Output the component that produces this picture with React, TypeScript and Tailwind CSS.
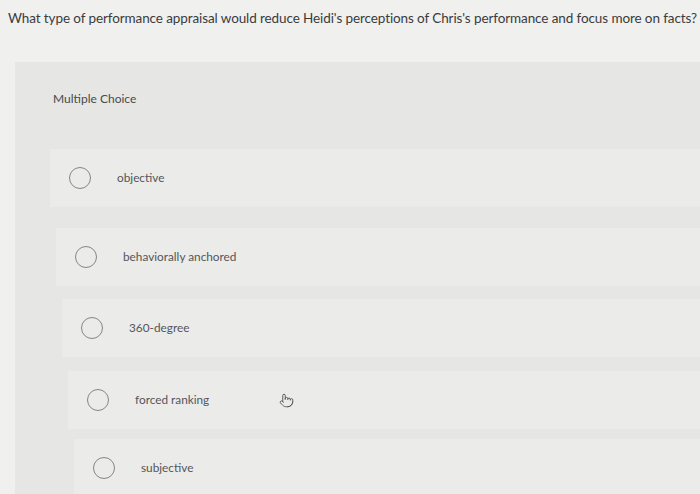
import { Pointer } from "lucide-react";

const options = [
  { label: "objective", row: "ml-[35px] mt-[42px]" },
  { label: "behaviorally anchored", row: "ml-[41px] mt-[21px]" },
  { label: "360-degree", row: "ml-[47px] mt-[13px]" },
  { label: "forced ranking", row: "ml-[53px] mt-[14px]", cursor: true },
  { label: "subjective", row: "ml-[59px] mt-[10px]" },
];

export default function App() {
  return (
    <div className="h-[494px] w-[700px] overflow-hidden bg-[#f0f0ee] font-['Lato',sans-serif] text-[#3b3b3d]">
      <p className="pl-[8px] pt-[9px] text-[13.5px] leading-[18px] tracking-[-0.1px]">
        What type of performance appraisal would reduce Heidi's perceptions of Chris's performance and focus more on facts?
      </p>

      <div className="ml-[15px] mt-[35px] h-[440px] bg-[#e6e6e4] pt-[29px]">
        <p className="pl-[38px] text-[12px] leading-[16px] text-[#4a4a4e]">Multiple Choice</p>

        {options.map((o) => (
          <div key={o.label} className={`${o.row} flex h-[58px] items-center bg-[#ebebe9] pl-[19px]`}>
            <span className="h-[22px] w-[22px] shrink-0 rounded-full border-[1.5px] border-[#85858c]" />
            <span className="ml-[26px] text-[11.8px] leading-[14px] text-[#55555a]">{o.label}</span>
            {o.cursor ? (
              <Pointer className="ml-[70px] h-[15px] w-[15px] text-[#555]" strokeWidth={1.5} />
            ) : null}
          </div>
        ))}
      </div>
    </div>
  );
}
